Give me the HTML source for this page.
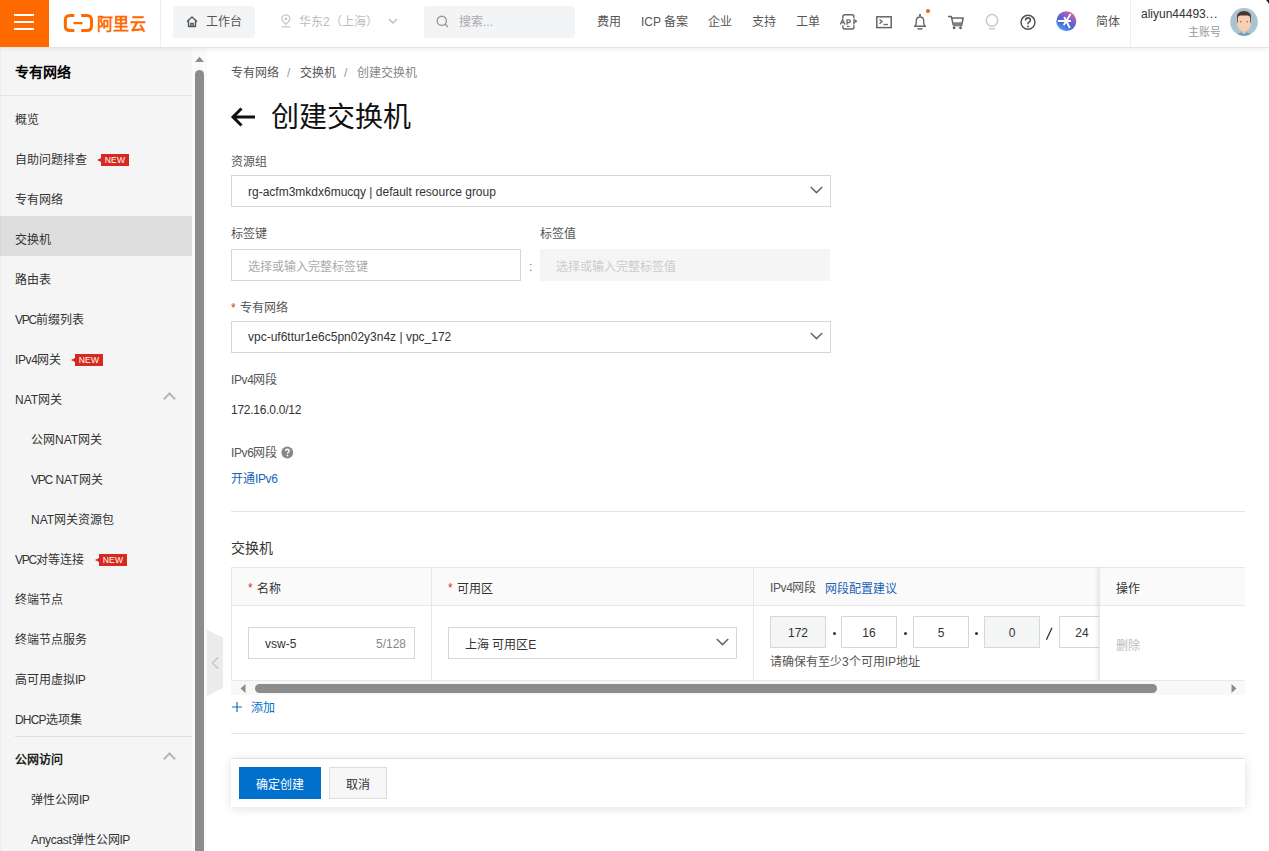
<!DOCTYPE html>
<html lang="zh-CN">
<head>
<meta charset="utf-8">
<style>
*{box-sizing:border-box;margin:0;padding:0}
html,body{width:1269px;height:851px;overflow:hidden;background:#fff;font-family:"Liberation Sans",sans-serif;font-size:12px;color:#333}
.a{position:absolute}
.t{position:absolute;white-space:nowrap;line-height:16px}
/* top bar */
#top{position:absolute;left:0;top:0;width:1269px;height:47px;background:#fff;z-index:5;box-shadow:0 1px 0 #e4e4e4,0 2px 5px rgba(0,0,0,.07)}
#burger{left:0;top:0;width:49px;height:47px;background:#ff6a00}
#burger i{position:absolute;left:14px;width:20px;height:2px;background:#fff}
.navt{color:#555;font-size:12px}
/* sidebar */
#side{left:0;top:47px;width:192px;height:804px;background:#f5f5f5}
.si{position:absolute;left:0;width:192px;height:40px}
.si span{position:absolute;left:15px;top:12px;line-height:16px;white-space:nowrap;color:#333}
.new{position:absolute;width:28px;height:12px;background:#d6291f;color:#fff;font-size:8.5px;line-height:13px;text-align:center;font-weight:normal;font-style:normal;letter-spacing:0.2px}
.up{position:absolute;width:9px;height:9px;border-left:2px solid #b4b4b4;border-top:2px solid #b4b4b4;transform:rotate(45deg)}
.new:before{content:"";position:absolute;left:-4px;top:4px;border-style:solid;border-width:2px 4px 2px 0;border-color:transparent #d6291f transparent transparent}
.ls{font-weight:inherit}
/* main */
.lbl{color:#555}
.box{position:absolute;border:1px solid #d7d7d7;background:#fff}
.chev{position:absolute;width:8px;height:8px;border-right:1.5px solid #666;border-bottom:1.5px solid #666;transform:rotate(45deg)}
</style>
</head>
<body>
<div id="top">
  <div id="burger" class="a"><i style="top:14px"></i><i style="top:21px"></i><i style="top:28px"></i></div>
  <svg class="a" style="left:63px;top:13px" width="31" height="20" viewBox="0 0 31 20">
    <path d="M11.3 2.5 H7 Q2.3 2.5 2.3 7 V13 Q2.3 17.5 7 17.5 H11.3" fill="none" stroke="#ff6a00" stroke-width="3"/>
    <path d="M18.2 2.5 H23.8 Q28.5 2.5 28.5 7 V13 Q28.5 17.5 23.8 17.5 H18.2" fill="none" stroke="#ff6a00" stroke-width="3"/>
    <rect x="10.5" y="9" width="9" height="2.2" fill="#ff6a00"/>
  </svg>
  <div class="t" style="left:97px;top:14px;font-size:16px;line-height:20px;font-weight:bold;color:#ff6a00;transform:scaleY(1.1);transform-origin:0 50%;letter-spacing:0.3px">阿里云</div>
  <div class="a" style="left:160px;top:0;width:1px;height:47px;background:#eee"></div>
  <div class="a" style="left:173px;top:6px;width:82px;height:32px;background:#f3f4f6;border-radius:3px"></div>
  <svg class="a" style="left:185px;top:15px" width="14" height="13" viewBox="0 0 14 13"><path d="M2 6.5 L7 2 L12 6.5 M3.5 5.5 V11.5 H10.5 V5.5 M5.8 11.5 V8.5 H8.2 V11.5" fill="none" stroke="#555" stroke-width="1.4" stroke-linejoin="round"/></svg>
  <div class="t navt" style="left:206px;top:14px">工作台</div>
  <svg class="a" style="left:280px;top:13px" width="12" height="17" viewBox="0 0 12 17"><path d="M5.9 11.3 C3.4 8.9 1.9 7.1 1.9 5.9 A4 4 0 0 1 9.9 5.9 C9.9 7.1 8.4 8.9 5.9 11.3Z" fill="none" stroke="#c4c8cc" stroke-width="1.3"/><circle cx="5.9" cy="6" r="1.4" fill="#c4c8cc"/><path d="M1.6 13.8 H10.2" stroke="#c4c8cc" stroke-width="1.3"/></svg>
  <div class="t navt" style="left:299px;top:14px;color:#bbb">华东2（上海）</div>
  <svg class="a" style="left:388px;top:18px" width="10" height="6" viewBox="0 0 10 6"><path d="M1 1 L5 5 L9 1" fill="none" stroke="#bbb" stroke-width="1.4"/></svg>
  <div class="a" style="left:424px;top:6px;width:151px;height:32px;background:#f3f4f6;border-radius:3px"></div>
  <svg class="a" style="left:436px;top:15px" width="13" height="13" viewBox="0 0 13 13"><circle cx="5.8" cy="5.8" r="4.6" fill="none" stroke="#999" stroke-width="1.4"/><path d="M9.2 9.2 L12 12" stroke="#999" stroke-width="1.5"/></svg>
  <div class="t navt" style="left:459px;top:14px;color:#aaa">搜索...</div>
  <div class="t navt" style="left:597px;top:14px">费用</div>
  <div class="t navt" style="left:641px;top:14px">ICP 备案</div>
  <div class="t navt" style="left:708px;top:14px">企业</div>
  <div class="t navt" style="left:752px;top:14px">支持</div>
  <div class="t navt" style="left:796px;top:14px">工单</div>
  <svg class="a" style="left:839px;top:13px" width="19" height="18" viewBox="0 0 19 18">
    <path d="M3.9 5.8 V3.6 Q3.9 1.8 5.7 1.8 H13.1 Q14.9 1.8 14.9 3.6 V5.5 M3.9 12.3 V14.2 Q3.9 16 5.7 16 H13.1 Q14.9 16 14.9 14.2 V12.3" fill="none" stroke="#666" stroke-width="1.4"/>
    <path d="M8 13.4 H10.6" stroke="#666" stroke-width="1.1"/>
    <path d="M1.3 11.4 L3.6 6.4 L5.9 11.4 M2.3 9.6 H4.9 M8 11.8 V6.8 H9.8 Q11.4 6.8 11.4 8.2 Q11.4 9.6 9.8 9.6 H8 M14.9 11.6 V6.8 H15.6 L17.6 8.2 L15.6 9.6 H14.9" fill="none" stroke="#666" stroke-width="1.25" stroke-linejoin="round"/>
  </svg>
  <svg class="a" style="left:875px;top:15px" width="18" height="14" viewBox="0 0 18 14"><rect x="1.8" y="1.8" width="14.4" height="10.8" fill="none" stroke="#666" stroke-width="1.5"/><path d="M4.5 4.5 L7 6.6 L4.5 8.7" fill="none" stroke="#666" stroke-width="1.3"/><path d="M8.5 9.5 H13" stroke="#666" stroke-width="1.3"/></svg>
  <svg class="a" style="left:912px;top:8px" width="20" height="23" viewBox="0 0 20 23"><circle cx="8" cy="7.2" r="1.15" fill="#666"/><path d="M2.6 18.3 Q4.3 17.2 4.3 14.6 V12.8 Q4.3 9 8 9 Q11.7 9 11.7 12.8 V14.6 Q11.7 17.2 13.4 18.3Z" fill="none" stroke="#666" stroke-width="1.4" stroke-linejoin="round"/><path d="M5.5 20.9 H10.5" stroke="#666" stroke-width="1.5"/><circle cx="16" cy="3.1" r="2.1" fill="#f26a10"/></svg>
  <svg class="a" style="left:947px;top:15px" width="18" height="15" viewBox="0 0 18 15"><path d="M1 1.4 H4.3 L6.3 10.4" fill="none" stroke="#666" stroke-width="1.5" stroke-linejoin="round"/><path d="M4.6 3 H16.2 L14.6 10.5 H6.3" fill="none" stroke="#666" stroke-width="1.5" stroke-linejoin="round"/><path d="M5.8 7.2 H15.3 L14.6 10.7 H6.5Z" fill="#808080"/><circle cx="7.1" cy="12.8" r="1.35" fill="#555"/><circle cx="13.5" cy="12.8" r="1.35" fill="#555"/></svg>
  <svg class="a" style="left:984px;top:13px" width="16" height="18" viewBox="0 0 16 18"><path d="M6.3 13 Q2.3 11.3 2.3 7.3 A5.7 5.7 0 0 1 13.7 7.3 Q13.7 11.3 9.7 13Z" fill="none" stroke="#c5cace" stroke-width="1.5" stroke-linejoin="round"/><path d="M5 15.7 H11" stroke="#c5cace" stroke-width="1.5"/></svg>
  <svg class="a" style="left:1019px;top:14px" width="18" height="17" viewBox="0 0 18 17"><circle cx="9" cy="8.3" r="7" fill="none" stroke="#555" stroke-width="1.5"/><path d="M6.6 6.4 Q6.6 3.9 9 3.9 Q11.4 3.9 11.4 6.2 Q11.4 7.5 9.8 8.3 Q9 8.8 9 10.2" fill="none" stroke="#555" stroke-width="1.6"/><circle cx="9" cy="12.5" r="1" fill="#555"/></svg>
  <svg class="a" style="left:1055px;top:10px" width="23" height="23" viewBox="0 0 23 23"><defs><linearGradient id="g1" x1="0.85" y1="0.05" x2="0.3" y2="0.95"><stop offset="0" stop-color="#e066a4"/><stop offset="0.45" stop-color="#6a5fcc"/><stop offset="0.75" stop-color="#3f6fdc"/><stop offset="1" stop-color="#5aa8f2"/></linearGradient></defs><circle cx="11.3" cy="11.3" r="10" fill="url(#g1)"/><path d="M2.8 11 H16 M15.6 4 L8.7 15.2 M9.2 7 L14.8 18" stroke="#fff" stroke-width="1.9" fill="none"/></svg>
  <div class="t navt" style="left:1096px;top:14px;color:#555">简体</div>
  <div class="a" style="left:1130px;top:0;width:1px;height:47px;background:#eee"></div>
  <div class="t" style="left:1141px;top:6px;font-size:12px;color:#333">aliyun44493<b class="ls" style="letter-spacing:0.8px">...</b></div>
  <div class="t" style="left:1188px;top:24px;font-size:11px;color:#999">主账号</div>
  <svg class="a" style="left:1229px;top:7px" width="30" height="30" viewBox="0 0 30 30"><defs><clipPath id="cp"><circle cx="15" cy="14.9" r="13.8"/></clipPath></defs><circle cx="15" cy="14.9" r="13.8" fill="#a9c3d1"/><g clip-path="url(#cp)"><path d="M7.5 30 Q8.5 26 13 25.2 H17 Q21.5 26 22.5 30Z" fill="#6d9abf"/><path d="M13 25.3 H17 L16.2 26.6 H13.8Z" fill="#e8eef2"/><rect x="13" y="21.5" width="4" height="4.5" fill="#f0c3a3"/><path d="M8.6 12 Q8.6 7 15 7 Q21.4 7 21.4 12 V17 Q21.4 21 18.5 23 Q16.5 24.6 15 24.6 Q13.5 24.6 11.5 23 Q8.6 21 8.6 17Z" fill="#f7cfb2"/><ellipse cx="8.3" cy="18" rx="1" ry="1.6" fill="#f0c3a3"/><ellipse cx="21.7" cy="18" rx="1" ry="1.6" fill="#f0c3a3"/><path d="M8 15.5 V10.5 Q8 4 15 4 Q22 4 22 10.5 V15.5 H21.3 V11.5 Q21 8.6 18.5 8.6 H11.5 Q9 8.6 8.7 11.5 V15.5Z" fill="#4d342c"/><circle cx="11.8" cy="14.8" r="0.8" fill="#8a6a5a"/><circle cx="18.3" cy="14.8" r="0.8" fill="#8a6a5a"/></g></svg>
<svg class="a" style="left:1266px;top:0" width="3" height="4" viewBox="0 0 3 4"><path d="M0 0 H3 V4 Q1.5 1.5 0 0Z" fill="#222"/></svg>
</div>

<div id="side" class="a">
<div class="t" style="left:15px;top:15px;font-size:14px;line-height:20px;font-weight:bold;color:#000">专有网络</div>
<div class="a" style="left:0;top:48px;width:192px;height:1px;background:#e5e5e5"></div>
<div class="si" style="top:49px"><span style="left:15px;top:16px">概览</span></div>
<div class="si" style="top:89px"><span style="left:15px;top:16px">自助问题排查</span><i class="new" style="left:101px;top:18px">NEW</i></div>
<div class="si" style="top:129px"><span style="left:15px;top:16px">专有网络</span></div>
<div class="si" style="top:169px;background:#dedede"><span style="left:15px;top:16px">交换机</span></div>
<div class="si" style="top:209px"><span style="left:15px;top:16px">路由表</span></div>
<div class="si" style="top:249px"><span style="left:15px;top:16px"><b class="ls" style="letter-spacing:-1.2px">VPC</b>前缀列表</span></div>
<div class="si" style="top:289px"><span style="left:15px;top:16px"><b class="ls" style="letter-spacing:-0.4px">IPv4</b>网关</span><i class="new" style="left:75px;top:18px">NEW</i></div>
<div class="si" style="top:329px"><span style="left:15px;top:16px">NAT网关</span></div>
<div class="si" style="top:369px"><span style="left:31px;top:16px">公网NAT网关</span></div>
<div class="si" style="top:409px"><span style="left:31px;top:16px"><b class="ls" style="letter-spacing:-1.2px">VPC</b> NAT网关</span></div>
<div class="si" style="top:449px"><span style="left:31px;top:16px">NAT网关资源包</span></div>
<div class="si" style="top:489px"><span style="left:15px;top:16px"><b class="ls" style="letter-spacing:-1.2px">VPC</b>对等连接</span><i class="new" style="left:99px;top:18px">NEW</i></div>
<div class="si" style="top:529px"><span style="left:15px;top:16px">终端节点</span></div>
<div class="si" style="top:569px"><span style="left:15px;top:16px">终端节点服务</span></div>
<div class="si" style="top:609px"><span style="left:15px;top:16px">高可用虚拟<b class="ls" style="letter-spacing:-0.6px">IP</b></span></div>
<div class="si" style="top:649px"><span style="left:15px;top:16px"><b class="ls" style="letter-spacing:-0.8px">DHCP</b>选项集</span></div>
<div class="up" style="left:165px;top:347px"></div>
<div class="a" style="left:15px;top:689px;width:177px;height:1px;background:#dcdde6"></div>
<div class="si" style="top:689px"><span style="left:15px;top:16px;font-weight:bold;color:#222">公网访问</span></div>
<div class="up" style="left:165px;top:707px"></div>
<div class="si" style="top:729px"><span style="left:31px;top:16px">弹性公网<b class="ls" style="letter-spacing:-0.6px">IP</b></span></div>
<div class="si" style="top:769px"><span style="left:31px;top:16px"><b class="ls" style="letter-spacing:-0.3px">Anycast</b>弹性公网<b class="ls" style="letter-spacing:-0.6px">IP</b></span></div>
</div>


<!-- sidebar scrollbar -->
<div class="a" style="left:0;top:47px;width:1px;height:804px;background:rgba(0,0,0,0.035);z-index:2"></div>
<div class="a" style="left:192px;top:47px;width:15px;height:804px;background:#fafafa"></div>
<svg class="a" style="left:195px;top:56px" width="9" height="6" viewBox="0 0 9 6"><path d="M0 6 L4.5 0.8 L9 6Z" fill="#8c8c8c"/></svg>
<div class="a" style="left:195px;top:70px;width:9px;height:800px;background:#8c8c8c;border-radius:4.5px"></div>
<!-- collapse tab -->
<svg class="a" style="left:207px;top:630px" width="17" height="67" viewBox="0 0 17 67"><path d="M0 0 L16 7.5 V58 L0 66Z" fill="#ebebeb"/><path d="M11 27.5 L5.5 33 L11 38.5" fill="none" stroke="#c4c4c4" stroke-width="1.3"/></svg>

<!-- breadcrumb -->
<div class="t" style="left:231px;top:65px;color:#555">专有网络</div>
<div class="t" style="left:287px;top:65px;color:#999">/</div>
<div class="t" style="left:300px;top:65px;color:#555">交换机</div>
<div class="t" style="left:344px;top:65px;color:#999">/</div>
<div class="t" style="left:357px;top:65px;color:#888">创建交换机</div>
<!-- title -->
<svg class="a" style="left:230px;top:106px" width="27" height="22" viewBox="0 0 27 22"><path d="M25 11 H3.5 M11.5 2.5 L3 11 L11.5 19.5" fill="none" stroke="#111" stroke-width="3"/></svg>
<div class="t" style="left:271px;top:98px;font-size:28px;line-height:40px;color:#111;font-weight:300">创建交换机</div>

<!-- resource group -->
<div class="t lbl" style="left:231px;top:154px">资源组</div>
<div class="box" style="left:231px;top:175px;width:600px;height:32px"></div>
<div class="t" style="left:248px;top:184px;color:#333">rg-acfm3mkdx6mucqy | default resource group</div>
<svg class="a" style="left:810px;top:186px" width="13" height="8" viewBox="0 0 13 8"><path d="M0.8 1 L6.5 6.6 L12.2 1" fill="none" stroke="#666" stroke-width="1.5"/></svg>

<!-- tags -->
<div class="t lbl" style="left:231px;top:226px">标签键</div>
<div class="box" style="left:231px;top:249px;width:290px;height:32px"></div>
<div class="t" style="left:248px;top:259px;color:#aaa">选择或输入完整标签键</div>
<div class="t" style="left:529px;top:259px;color:#777">:</div>
<div class="t lbl" style="left:540px;top:226px">标签值</div>
<div class="a" style="left:540px;top:249px;width:290px;height:32px;background:#f5f5f5"></div>
<div class="t" style="left:556px;top:259px;color:#ccc">选择或输入完整标签值</div>

<!-- vpc -->
<div class="t" style="left:231px;top:300px;color:#d93026">*</div>
<div class="t lbl" style="left:240px;top:300px">专有网络</div>
<div class="box" style="left:231px;top:321px;width:600px;height:32px"></div>
<div class="t" style="left:248px;top:329px;color:#333">vpc-uf6ttur1e6c5pn02y3n4z | vpc_172</div>
<svg class="a" style="left:810px;top:332px" width="13" height="8" viewBox="0 0 13 8"><path d="M0.8 1 L6.5 6.6 L12.2 1" fill="none" stroke="#666" stroke-width="1.5"/></svg>

<!-- ipv4 -->
<div class="t lbl" style="left:231px;top:372px"><b class="ls" style="letter-spacing:-0.4px">IPv4</b>网段</div>
<div class="t" style="left:231px;top:402px;color:#333"><b class="ls" style="letter-spacing:-0.25px">172.16.0.0/12</b></div>
<div class="t lbl" style="left:231px;top:445px"><b class="ls" style="letter-spacing:-0.4px">IPv6</b>网段</div>
<svg class="a" style="left:281px;top:446px" width="13" height="13" viewBox="0 0 13 13"><circle cx="6.3" cy="6.5" r="5.9" fill="#888"/><path d="M4.6 5.1 Q4.6 3.2 6.4 3.2 Q8.2 3.2 8.2 4.8 Q8.2 5.8 7.2 6.3 Q6.4 6.8 6.4 7.6" fill="none" stroke="#fff" stroke-width="1.35"/><circle cx="6.4" cy="9.4" r="0.85" fill="#fff"/></svg>
<div class="t" style="left:231px;top:471px;color:#1a64b4">开通<b class="ls" style="letter-spacing:-0.4px">IPv6</b></div>

<div class="a" style="left:231px;top:511px;width:1014px;height:1px;background:#e5e5e5"></div>
<div class="t" style="left:231px;top:538px;font-size:14px;line-height:20px;color:#333">交换机</div>

<!-- table -->
<div class="a" style="left:231px;top:567px;width:1014px;height:128px;overflow:hidden">
  <div class="a" style="left:0;top:0;width:1014px;height:1px;background:#e8e8e8"></div>
  <div class="a" style="left:0;top:1px;width:1014px;height:37px;background:#fafafa"></div>
  <div class="a" style="left:0;top:38px;width:1014px;height:1px;background:#e8e8e8"></div>
  <div class="a" style="left:0;top:113px;width:1014px;height:1px;background:#e8e8e8"></div>
  <div class="a" style="left:0;top:0;width:1px;height:114px;background:#e8e8e8"></div>
  <div class="a" style="left:200px;top:0;width:1px;height:114px;background:#e8e8e8"></div>
  <div class="a" style="left:522px;top:0;width:1px;height:114px;background:#e8e8e8"></div>
  <!-- col1 -->
  <div class="t" style="left:17px;top:13px;color:#d93026">*</div>
  <div class="t" style="left:26px;top:14px;color:#333">名称</div>
  <div class="box" style="left:17px;top:60px;width:167px;height:32px"></div>
  <div class="t" style="left:34px;top:69px;color:#333">vsw-5</div>
  <div class="t" style="left:145px;top:69px;color:#888">5/128</div>
  <!-- col2 -->
  <div class="t" style="left:217px;top:13px;color:#d93026">*</div>
  <div class="t" style="left:226px;top:14px;color:#333">可用区</div>
  <div class="box" style="left:217px;top:60px;width:289px;height:32px"></div>
  <div class="t" style="left:234px;top:70px;color:#333">上海 可用区E</div>
  <svg class="a" style="left:485px;top:71px" width="13" height="8" viewBox="0 0 13 8"><path d="M0.8 1 L6.5 6.6 L12.2 1" fill="none" stroke="#666" stroke-width="1.5"/></svg>
  <!-- col3 -->
  <div class="t" style="left:539px;top:13px;color:#555"><b class="ls" style="letter-spacing:-0.4px">IPv4</b>网段</div>
  <div class="t" style="left:594px;top:14px;color:#1a64b4">网段配置建议</div>
  <div class="box" style="left:539px;top:49px;width:56px;height:32px;background:#f4f5f5"></div>
  <div class="t" style="left:539px;top:58px;width:56px;text-align:center;color:#333">172</div>
  <div class="a" style="left:602px;top:65px;width:3px;height:3px;border-radius:50%;background:#333"></div>
  <div class="box" style="left:610px;top:49px;width:56px;height:32px"></div>
  <div class="t" style="left:610px;top:58px;width:56px;text-align:center;color:#333">16</div>
  <div class="a" style="left:673px;top:65px;width:3px;height:3px;border-radius:50%;background:#333"></div>
  <div class="box" style="left:682px;top:49px;width:56px;height:32px"></div>
  <div class="t" style="left:682px;top:58px;width:56px;text-align:center;color:#333">5</div>
  <div class="a" style="left:744px;top:65px;width:3px;height:3px;border-radius:50%;background:#333"></div>
  <div class="box" style="left:753px;top:49px;width:56px;height:32px;background:#f4f5f5"></div>
  <div class="t" style="left:753px;top:58px;width:56px;text-align:center;color:#333">0</div>
  <svg class="a" style="left:814px;top:60px" width="8" height="14" viewBox="0 0 8 14"><path d="M7 0.8 L1.4 12.8" stroke="#333" stroke-width="1.3"/></svg>
  <div class="box" style="left:828px;top:49px;width:56px;height:32px"></div>
  <div class="t" style="left:828px;top:58px;width:46px;text-align:center;color:#333">24</div>
  <div class="t" style="left:539px;top:87px;color:#555">请确保有至少3个可用IP地址</div>
  <!-- fixed col -->
  <div class="a" style="left:868px;top:0;width:146px;height:114px;background:#fff;box-shadow:-2px 0 3px rgba(0,0,0,0.08)">
    <div class="a" style="left:0;top:0;width:146px;height:1px;background:#e8e8e8"></div>
    <div class="a" style="left:0;top:1px;width:146px;height:37px;background:#fafafa"></div>
    <div class="a" style="left:0;top:38px;width:146px;height:1px;background:#e8e8e8"></div>
    <div class="a" style="left:0;top:113px;width:146px;height:1px;background:#e8e8e8"></div>
    <div class="a" style="left:0;top:0;width:1px;height:114px;background:#e8e8e8"></div>
    <div class="t" style="left:17px;top:14px;color:#333">操作</div>
    <div class="t" style="left:17px;top:71px;color:#bbb">删除</div>
  </div>
  <!-- scrollbar -->
  <div class="a" style="left:0;top:114px;width:1014px;height:14px;background:#f8f8f8"></div>
  <svg class="a" style="left:9px;top:117px" width="6" height="9" viewBox="0 0 6 9"><path d="M5.5 0 L0.5 4.5 L5.5 9Z" fill="#8c8c8c"/></svg>
  <div class="a" style="left:24px;top:117px;width:902px;height:9px;border-radius:4.5px;background:#8c8c8c"></div>
  <svg class="a" style="left:1000px;top:117px" width="6" height="9" viewBox="0 0 6 9"><path d="M0.5 0 L5.5 4.5 L0.5 9Z" fill="#8c8c8c"/></svg>
</div>

<!-- add -->
<svg class="a" style="left:231px;top:701px" width="12" height="12" viewBox="0 0 12 12"><path d="M6 1 V11 M1 6 H11" stroke="#1a6cc0" stroke-width="1.2"/></svg>
<div class="t" style="left:251px;top:700px;color:#0070cc">添加</div>
<div class="a" style="left:231px;top:733px;width:1014px;height:1px;background:#e5e5e5"></div>

<!-- footer -->
<div class="a" style="left:231px;top:759px;width:1014px;height:48px;background:#fff;box-shadow:0 -1px 0 rgba(0,0,0,0.08),0 1px 10px rgba(0,0,0,0.13)"></div>
<div class="a" style="left:239px;top:767px;width:82px;height:32px;background:#0070cc"></div>
<div class="t" style="left:239px;top:777px;width:82px;text-align:center;color:#fff">确定创建</div>
<div class="a" style="left:329px;top:767px;width:58px;height:32px;background:#f7f7f7;border:1px solid #ddd"></div>
<div class="t" style="left:329px;top:777px;width:58px;text-align:center;color:#333">取消</div>

</body>
</html>
